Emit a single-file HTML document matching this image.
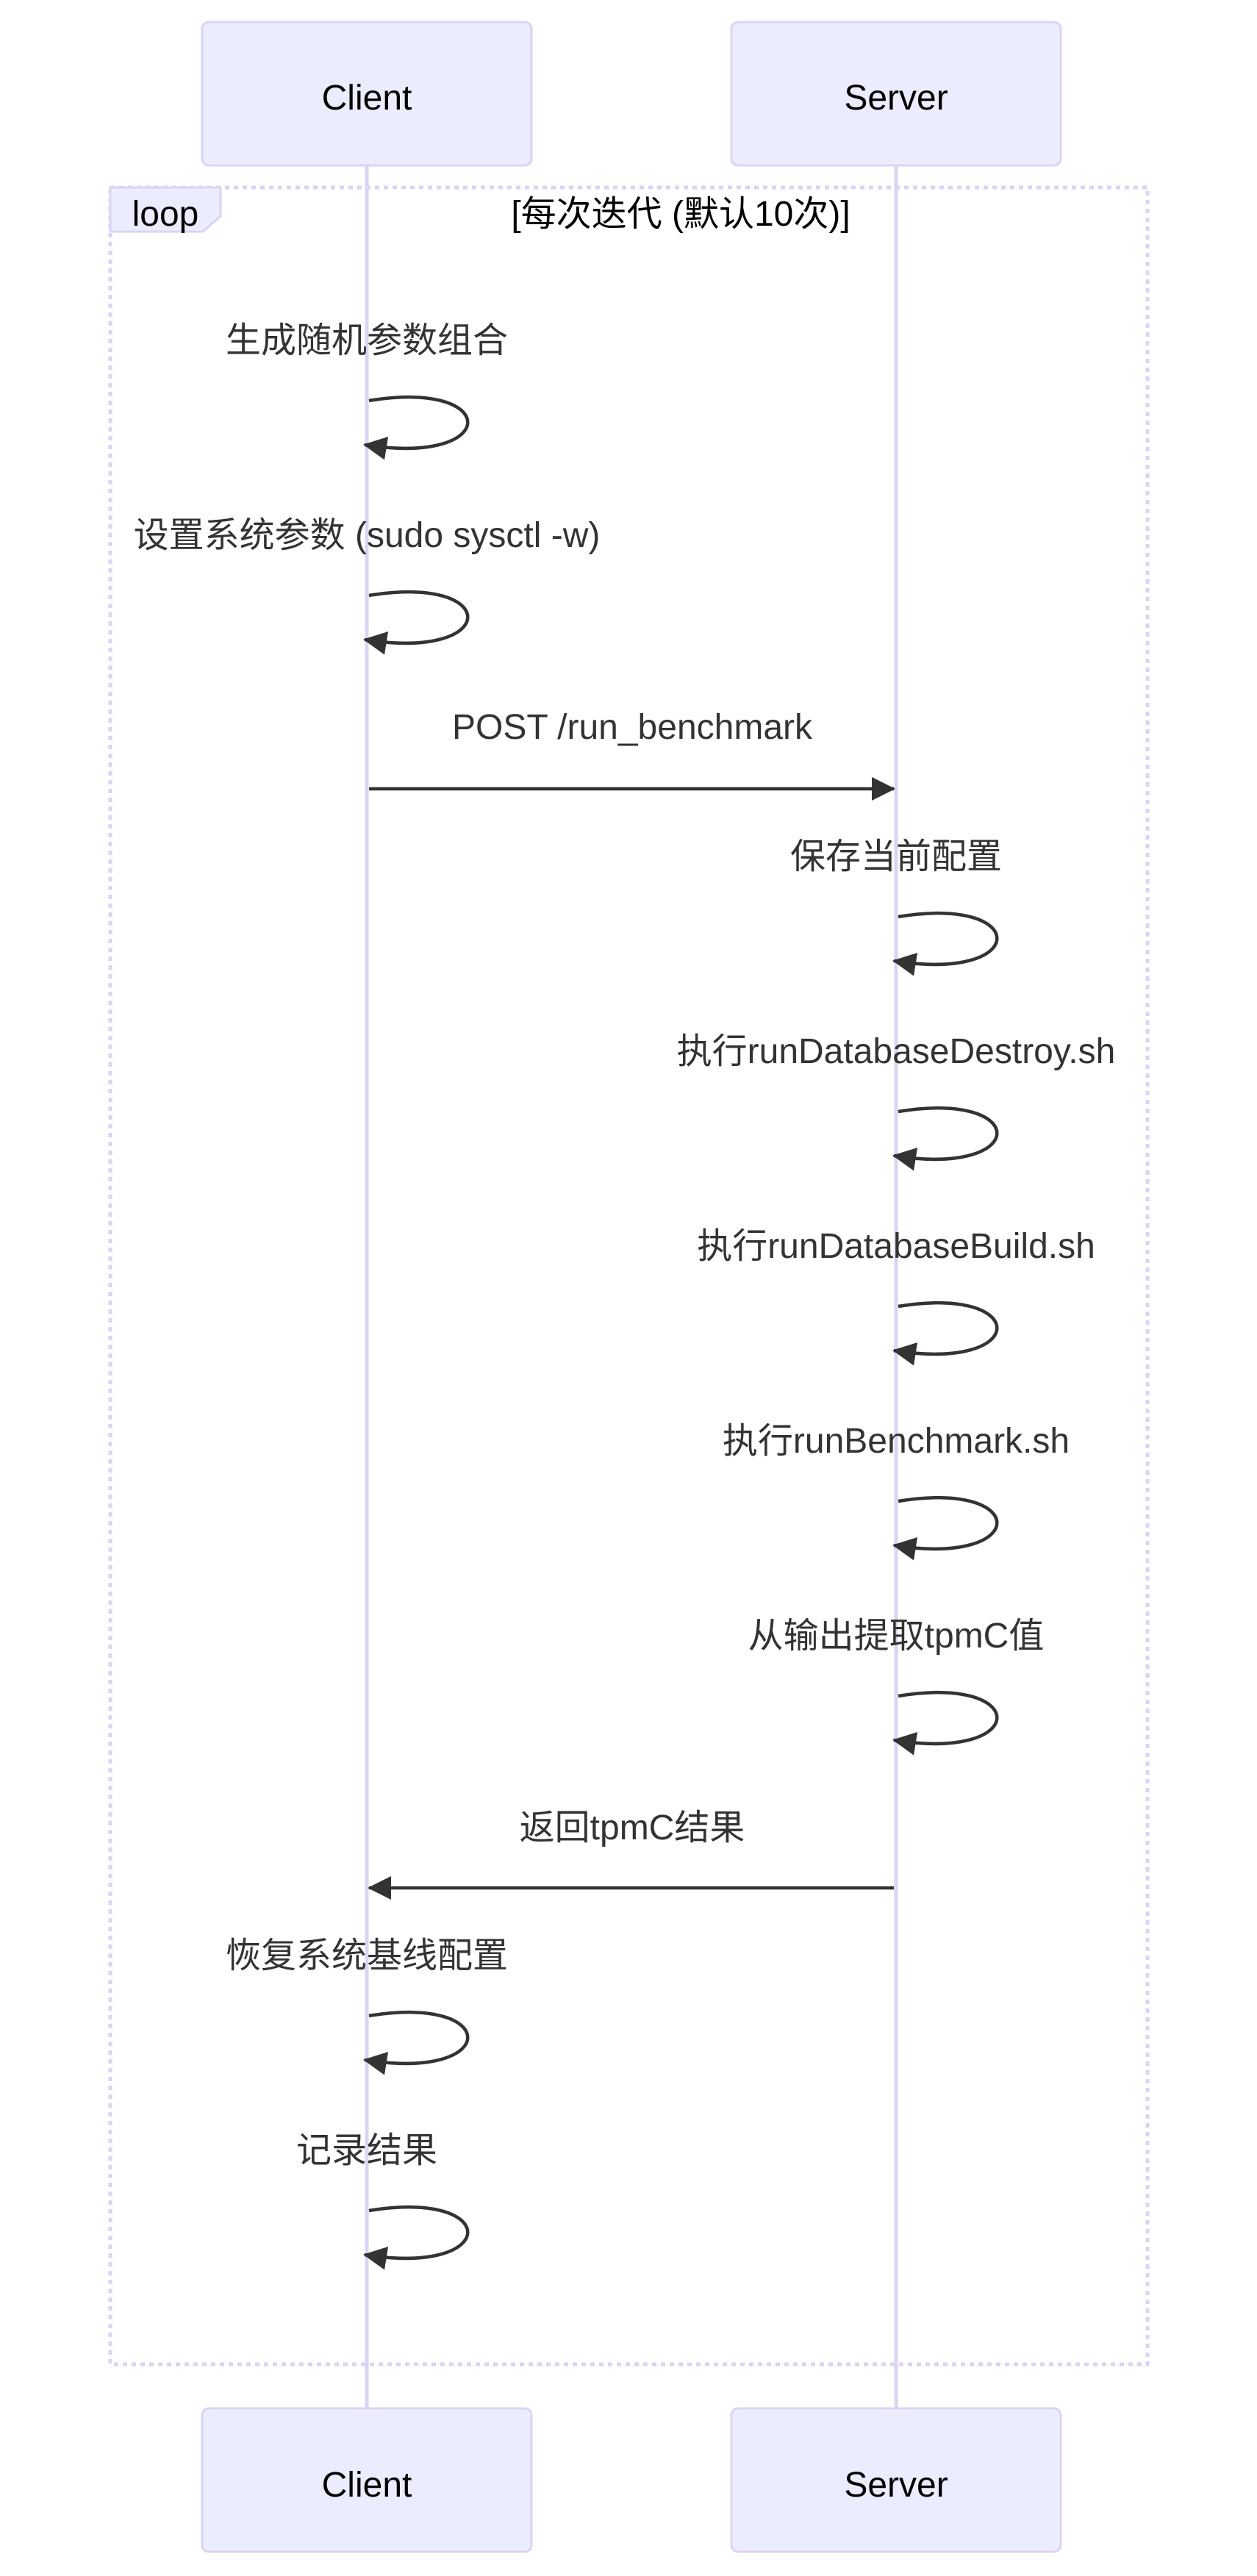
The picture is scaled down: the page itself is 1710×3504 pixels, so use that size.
<!DOCTYPE html>
<html><head><meta charset="utf-8"><style>
html,body{margin:0;padding:0;background:#fff;}
svg{display:block;}
text{font-family:"Liberation Sans","Noto Sans CJK SC",sans-serif;}
</style></head><body>
<svg width="1710" height="3504" viewBox="0 0 1710 3504" xmlns="http://www.w3.org/2000/svg">
<defs>
<marker id="ah" markerUnits="userSpaceOnUse" markerWidth="34" markerHeight="34" refX="30" refY="16" orient="auto">
<path d="M0,0 L32,16 L0,32 z" fill="#333"/>
</marker>
</defs>
<rect x="0" y="0" width="1710" height="3504" fill="#fff"/>
<line x1="499" y1="225" x2="499" y2="3276" stroke="#DCD3F3" stroke-width="5"/>
<line x1="1219" y1="225" x2="1219" y2="3276" stroke="#DCD3F3" stroke-width="5"/>
<rect x="150" y="255" width="1411" height="2961" fill="none" stroke="#DCD3F3" stroke-width="5" stroke-dasharray="6 6"/>
<polygon points="150,255 300,255 300,294 276,315 150,315" fill="#ECECFF" stroke="#DCD3F3" stroke-width="3"/>
<text x="225" y="307" font-size="48" fill="#000" text-anchor="middle">loop</text>
<text x="926" y="307" font-size="48" fill="#000" text-anchor="middle">[每次迭代 (默认10次)]</text>
<rect x="275" y="30" width="448" height="195" rx="9" fill="#ECECFF" stroke="#DCD3F3" stroke-width="3"/>
<text x="499" y="149" font-size="48" fill="#000" text-anchor="middle">Client</text>
<rect x="995" y="30" width="448" height="195" rx="9" fill="#ECECFF" stroke="#DCD3F3" stroke-width="3"/>
<text x="1219" y="149" font-size="48" fill="#000" text-anchor="middle">Server</text>
<rect x="275" y="3276" width="448" height="195" rx="9" fill="#ECECFF" stroke="#DCD3F3" stroke-width="3"/>
<text x="499" y="3396" font-size="48" fill="#000" text-anchor="middle">Client</text>
<rect x="995" y="3276" width="448" height="195" rx="9" fill="#ECECFF" stroke="#DCD3F3" stroke-width="3"/>
<text x="1219" y="3396" font-size="48" fill="#000" text-anchor="middle">Server</text>

<g fill="#333" font-size="48" text-anchor="middle">
<text x="499" y="479">生成随机参数组合</text>
<text x="499" y="744">设置系统参数 (sudo sysctl -w)</text>
<text x="860" y="1005">POST /run_benchmark</text>
<text x="1219" y="1181">保存当前配置</text>
<text x="1219" y="1446">执行runDatabaseDestroy.sh</text>
<text x="1219" y="1711">执行runDatabaseBuild.sh</text>
<text x="1219" y="1976">执行runBenchmark.sh</text>
<text x="1219" y="2241">从输出提取tpmC值</text>
<text x="860" y="2502">返回tpmC结果</text>
<text x="499" y="2676">恢复系统基线配置</text>
<text x="499" y="2941">记录结果</text>
</g>

<g fill="none" stroke="#333" stroke-width="4.5" marker-end="url(#ah)">
<path d="M502,545 C682,515 682,635 496,605"/>
<path d="M502,810 C682,780 682,900 496,870"/>
<line x1="502" y1="1073" x2="1216" y2="1073"/>
<path d="M1222,1247 C1402,1217 1402,1337 1216,1307"/>
<path d="M1222,1512 C1402,1482 1402,1602 1216,1572"/>
<path d="M1222,1777 C1402,1747 1402,1867 1216,1837"/>
<path d="M1222,2042 C1402,2012 1402,2132 1216,2102"/>
<path d="M1222,2307 C1402,2277 1402,2397 1216,2367"/>
<line x1="1216" y1="2568" x2="502" y2="2568"/>
<path d="M502,2742 C682,2712 682,2832 496,2802"/>
<path d="M502,3007 C682,2977 682,3097 496,3067"/>
</g>
</svg>
</body></html>
